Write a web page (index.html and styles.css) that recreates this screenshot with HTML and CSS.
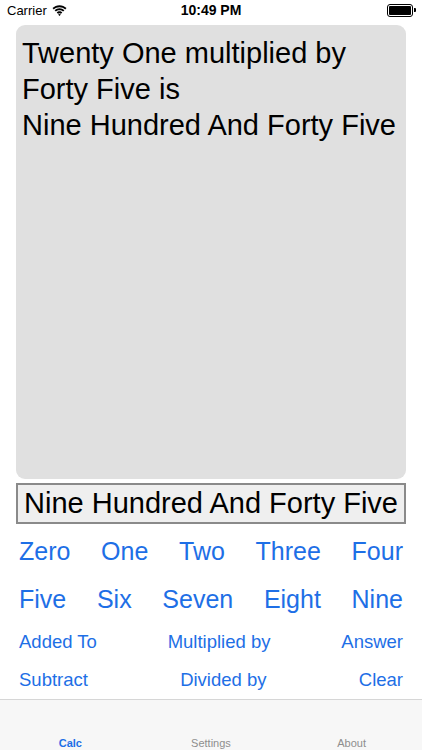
FILE: index.html
```html
<!DOCTYPE html>
<html lang="en">
<head>
  <meta charset="UTF-8">
  <title>Calc</title>
  <link rel="stylesheet" href="styles.css">
</head>
<body>
<div class="status">
  <div class="status-left">
    Carrier
    <svg class="wifi" width="15" height="11" viewBox="0 0 15 11">
      <path d="M7.5 2.2c2.2 0 4.2.8 5.7 2.2l1.3-1.3C12.6 1.2 10.2.2 7.5.2S2.4 1.2.5 3.1l1.3 1.3C3.3 3 5.3 2.2 7.5 2.2z" fill="#000"/>
      <path d="M7.5 5.2c1.4 0 2.7.5 3.6 1.4l1.3-1.3C11.1 4 9.4 3.3 7.5 3.3S3.9 4 2.6 5.3l1.3 1.3c.9-.9 2.2-1.4 3.6-1.4z" fill="#000"/>
      <path d="M7.5 8.2c.6 0 1.1.2 1.5.6l1.3-1.3C9.6 6.8 8.6 6.3 7.5 6.3s-2.1.5-2.8 1.2l1.3 1.3c.4-.4.9-.6 1.5-.6zM7.5 11l1.4-1.4c-.4-.4-.9-.6-1.4-.6s-1 .2-1.4.6L7.5 11z" fill="#000"/>
    </svg>
  </div>
  <div class="status-time">10:49 PM</div>
  <div class="status-right">
    <span class="battery"><span class="battery-level"></span></span><span class="battery-nub"></span>
  </div>
</div>

<div class="main">
  <div class="display">Twenty One multiplied by<br>Forty Five is<br>Nine Hundred And Forty Five</div>
  <div class="answer">Nine Hundred And Forty Five</div>

  <div class="row big first">
    <a href="#">Zero</a><a href="#">One</a><a href="#">Two</a><a href="#">Three</a><a href="#">Four</a>
  </div>
  <div class="row big">
    <a href="#">Five</a><a href="#">Six</a><a href="#">Seven</a><a href="#">Eight</a><a href="#">Nine</a>
  </div>
  <div class="row small">
    <a href="#">Added To</a><a href="#">Multiplied by</a><a href="#">Answer</a>
  </div>
  <div class="row small">
    <a href="#">Subtract</a><a href="#">Divided by</a><a href="#">Clear</a>
  </div>
</div>

<div class="tabbar">
  <a href="#" class="tab active">Calc</a>
  <a href="#" class="tab">Settings</a>
  <a href="#" class="tab">About</a>
</div>
</body>
</html>
```

FILE: styles.css
```css
html, body {
  margin: 0;
  padding: 0;
}

body {
  width: 422px;
  height: 750px;
  background: #fff;
  font-family: "Liberation Sans", Arial, sans-serif;
  color: #000;
  display: flex;
  flex-direction: column;
  overflow: hidden;
}

.status {
  height: 20px;
  flex-shrink: 0;
  display: flex;
  align-items: center;
  padding: 0 6px 0 7px;
  font-size: 13px;
  position: relative;
}

.status-left {
  display: flex;
  align-items: center;
  gap: 5px;
  flex: 1;
}

.status-time {
  font-weight: bold;
  font-size: 14px;
  position: absolute;
  left: 0;
  right: 0;
  text-align: center;
}

.status-right {
  display: flex;
  align-items: center;
}

.battery {
  width: 22px;
  height: 9px;
  border: 1px solid #000;
  border-radius: 3px;
  padding: 1px;
  display: flex;
}

.battery-level {
  flex: 1;
  background: #000;
  border-radius: 1px;
}

.battery-nub {
  width: 2px;
  height: 4px;
  background: #000;
  border-radius: 0 1px 1px 0;
  margin-left: 1px;
}

.main {
  flex: 1;
  padding: 5px 16px 0;
  display: flex;
  flex-direction: column;
}

.display {
  height: 454px;
  flex-shrink: 0;
  box-sizing: border-box;
  background: #e0e0e0;
  border-radius: 9px;
  padding: 10px 6px;
  font-size: 29px;
  line-height: 36px;
}

.answer {
  margin-top: 4px;
  height: 41px;
  flex-shrink: 0;
  box-sizing: border-box;
  border: 2px solid #8a8a8a;
  background: #efefef;
  font-size: 29px;
  line-height: 37px;
  text-align: center;
  white-space: nowrap;
}

.row {
  display: flex;
  flex-shrink: 0;
  justify-content: space-between;
  padding: 0 3px;
}

.row a {
  color: #1e6fe6;
  text-decoration: none;
}

.row.big {
  font-size: 25px;
  height: 48px;
  line-height: 48px;
}

.row.first {
  margin-top: 3px;
}

.row.small {
  font-size: 18.5px;
  height: 38px;
  line-height: 38px;
}

.tabbar {
  height: 51px;
  flex-shrink: 0;
  box-sizing: border-box;
  background: #f7f7f7;
  border-top: 1px solid #d6d6d6;
  display: grid;
  grid-template-columns: 1fr 1fr 1fr;
}

.tab {
  font-size: 11px;
  color: #8e8e8e;
  text-decoration: none;
  text-align: center;
  padding-top: 37px;
}

.tab.active {
  color: #1e6fe6;
  font-weight: bold;
}
```
